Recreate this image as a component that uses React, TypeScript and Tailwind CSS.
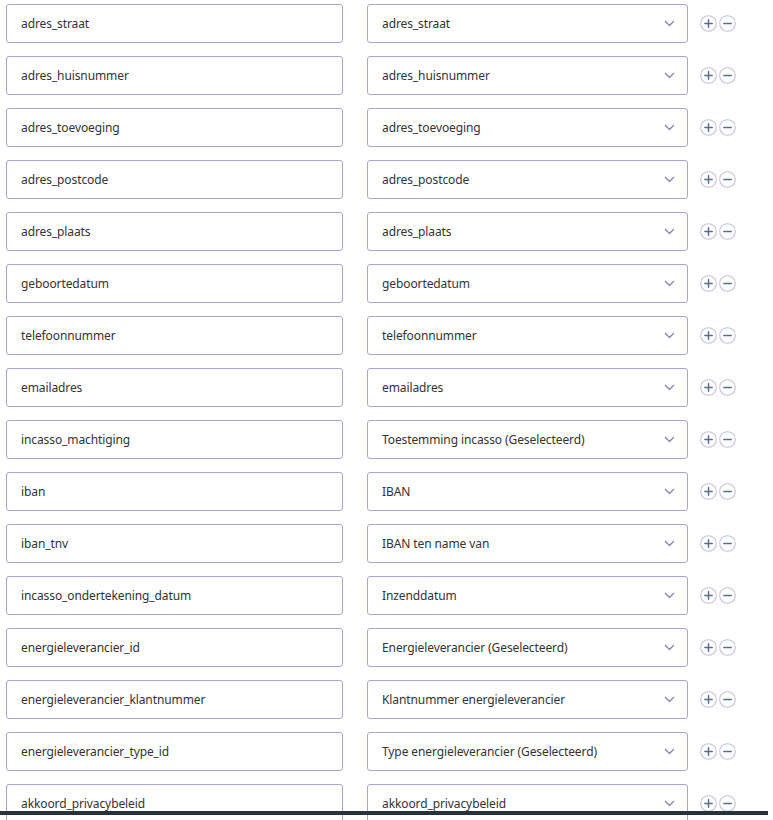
const rows: [string, string][] = [
  ['adres_straat', 'adres_straat'],
  ['adres_huisnummer', 'adres_huisnummer'],
  ['adres_toevoeging', 'adres_toevoeging'],
  ['adres_postcode', 'adres_postcode'],
  ['adres_plaats', 'adres_plaats'],
  ['geboortedatum', 'geboortedatum'],
  ['telefoonnummer', 'telefoonnummer'],
  ['emailadres', 'emailadres'],
  ['incasso_machtiging', 'Toestemming incasso (Geselecteerd)'],
  ['iban', 'IBAN'],
  ['iban_tnv', 'IBAN ten name van'],
  ['incasso_ondertekening_datum', 'Inzenddatum'],
  ['energieleverancier_id', 'Energieleverancier (Geselecteerd)'],
  ['energieleverancier_klantnummer', 'Klantnummer energieleverancier'],
  ['energieleverancier_type_id', 'Type energieleverancier (Geselecteerd)'],
  ['akkoord_privacybeleid', 'akkoord_privacybeleid'],
]

function RoundButton({ kind }: { kind: 'plus' | 'minus' }) {
  return (
    <svg width="17" height="17" viewBox="0 0 17 17" className="shrink-0">
      <circle cx="8.5" cy="8.5" r="7.8" fill="white" stroke="#c4c3d9" strokeWidth="1.1" />
      <path d="M4.8 8.5h7.4" stroke="#56708c" strokeWidth="1.5" strokeLinecap="round" />
      {kind === 'plus' && (
        <path d="M8.5 4.8v7.4" stroke="#56708c" strokeWidth="1.5" strokeLinecap="round" />
      )}
    </svg>
  )
}

function MappingRow({ field, label }: { field: string; label: string }) {
  return (
    <div className="flex items-center h-[39px]">
      <div className="w-[337px] h-full flex items-center pl-[14px] border border-[#a9a7cb] rounded-[3px] bg-white">
        <span className="text-[12px] tracking-[-0.1px] text-[#333]">{field}</span>
      </div>
      <div className="ml-[24px] w-[321px] h-full flex items-center justify-between pl-[14px] pr-[12px] border border-[#a9a7cb] rounded-[3px] bg-white">
        <span className="text-[12px] tracking-[-0.1px] text-[#333]">{label}</span>
        <svg width="11" height="7" viewBox="0 0 11 7">
          <path d="M1 1l4.5 4.5L10 1" fill="none" stroke="#8987ad" strokeWidth="1.4" />
        </svg>
      </div>
      <div className="ml-[12px] flex items-center gap-[2px]">
        <RoundButton kind="plus" />
        <RoundButton kind="minus" />
      </div>
    </div>
  )
}

export default function App() {
  return (
    <div className="min-h-screen bg-white font-['Noto_Sans',sans-serif] overflow-hidden h-[820px]">
      <div className="pt-[4px] pl-[6px] flex flex-col gap-[13px]">
        {rows.map(([field, label]) => (
          <MappingRow key={field} field={field} label={label} />
        ))}
      </div>
      {/* bottom bar */}
      <div className="fixed left-0 top-[811px] w-[768px] h-[4px] bg-[#27313b]" />
    </div>
  )
}
